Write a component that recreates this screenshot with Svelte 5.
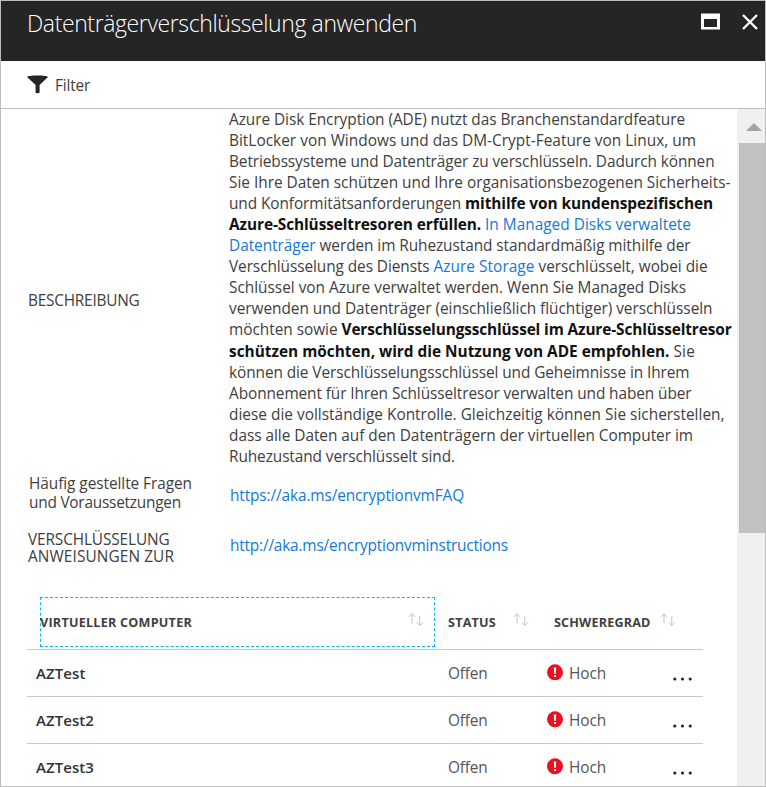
<script>
  // Each segment: text, style, advance width in px (up to the next segment).
  const description = [
    [['Azure Disk Encryption (ADE) nutzt das Branchenstandardfeature', '', 456]],
    [['BitLocker von Windows und das DM-Crypt-Feature von Linux, um', '', 467]],
    [['Betriebssysteme und Datenträger zu verschlüsseln. Dadurch können', '', 485.5]],
    [['Sie Ihre Daten schützen und Ihre organisationsbezogenen Sicherheits-', '', 501.5]],
    [['und Konformitätsanforderungen ', '', 236], ['mithilfe von kundenspezifischen', 'strong', 248]],
    [['Azure-Schlüsseltresoren erfüllen. ', 'strong', 256], ['In Managed Disks verwaltete', 'link', 206]],
    [['Datenträger ', 'link', 90.5], ['werden im Ruhezustand standardmäßig mithilfe der', '', 371]],
    [['Verschlüsselung des Diensts ', '', 204.5], ['Azure Storage ', 'link', 105], ['verschlüsselt, wobei die', '', 169]],
    [['Schlüssel von Azure verwaltet werden. Wenn Sie Managed Disks', '', 457]],
    [['verwenden und Datenträger (einschließlich flüchtiger) verschlüsseln', '', 483.5]],
    [['möchten sowie ', '', 112.5], ['Verschlüsselungsschlüssel im Azure-Schlüsseltresor', 'strong', 390]],
    [['schützen möchten, wird die Nutzung von ADE empfohlen. ', 'strong', 444.5], ['Sie', '', 21.5]],
    [['können die Verschlüsselungsschlüssel und Geheimnisse in Ihrem', '', 460.5]],
    [['Abonnement für Ihren Schlüsseltresor verwalten und haben über', '', 462.5]],
    [['diese die vollständige Kontrolle. Gleichzeitig können Sie sicherstellen,', '', 495.5]],
    [['dass alle Daten auf den Datenträgern der virtuellen Computer im', '', 464]],
    [['Ruhezustand verschlüsselt sind.', '', 226]]
  ];

  const machines = [['AZTest', 49.5], ['AZTest2', 58], ['AZTest3', 58]];

  // Tracks a run of text so that it takes exactly the given width.
  function fit(node, width) {
    const natural = node.getBoundingClientRect().width;
    node.style.letterSpacing = `${(width - natural) / node.textContent.length}px`;
  }
</script>

{#snippet sort()}
  <svg class="sort" width="16" height="14" viewBox="0 0 16 14" fill="none" stroke="#c4c4c4" stroke-width="1">
    <path d="M4 10.5V.8M.8 4 4 .8 7.2 4M11.8 3v9.5M8.6 9.3l3.2 3.2L15 9.3" />
  </svg>
{/snippet}

<div class="blade">
  <header>
    <h1><span use:fit={390}>Datenträgerverschlüsselung anwenden</span></h1>
    <svg class="max" width="19" height="17" viewBox="0 0 19 17"><path fill="#fff" fill-rule="evenodd" d="M0 .5h19v16H0zM3 6v8h13V6z" /></svg>
    <svg class="close" width="16" height="16" viewBox="0 0 16 16"><path d="M1 1l14 14M15 1 1 15" stroke="#fff" stroke-width="2.4" /></svg>
  </header>

  <div class="toolbar">
    <svg width="21" height="19" viewBox="0 0 21 19" fill="#252525"><path d="M0 2C0-.1 21-.1 21 2L12.6 10v7.2c0 1-4 1.5-4 .2V10Z" /></svg>
    <span use:fit={35}>Filter</span>
  </div>

  <div class="body">
    <main>
      <section class="row intro">
        <div class="label"><span use:fit={111.5}>BESCHREIBUNG</span></div>
        <div class="text">
          {#each description as line}
            <div class="line">{#each line as [text, kind, width]}<span class={kind} use:fit={width}>{text}</span>{/each}</div>
          {/each}
        </div>
      </section>
      <section class="row faq">
        <div class="label"><span use:fit={163}>Häufig gestellte Fragen</span><span use:fit={152}>und Voraussetzungen</span></div>
        <div class="url"><span class="link" use:fit={234}>https://aka.ms/encryptionvmFAQ</span></div>
      </section>
      <section class="row howto">
        <div class="label"><span use:fit={141.5}>VERSCHLÜSSELUNG</span><span use:fit={146}>ANWEISUNGEN ZUR</span></div>
        <div class="url"><span class="link" use:fit={278}>http://aka.ms/encryptionvminstructions</span></div>
      </section>

      <div class="table">
        <div class="head">
          <div class="focus"><span use:fit={152}>VIRTUELLER COMPUTER</span>{@render sort()}</div>
          <div class="status"><span use:fit={48}>STATUS</span>{@render sort()}</div>
          <div class="severity"><span use:fit={96.5}>SCHWEREGRAD</span>{@render sort()}</div>
        </div>
        {#each machines as [name, width]}
          <div class="item">
            <div class="name"><span use:fit={width}>{name}</span></div>
            <div class="state"><span use:fit={39.5}>Offen</span></div>
            <svg class="alert" width="16" height="17" viewBox="0 0 16 17"><circle cx="8" cy="8.3" r="8" fill="#e81123" /><path fill="#fff" d="M6.8 3.5h2.4L8.8 9.7H7.2zM7 10.9h2v2H7z" /></svg>
            <div class="level"><span use:fit={37}>Hoch</span></div>
            <svg class="more" width="19" height="4" viewBox="0 0 19 4" fill="#252525"><circle cx="1.8" cy="2" r="1.6" /><circle cx="9.5" cy="2" r="1.6" /><circle cx="17.2" cy="2" r="1.6" /></svg>
          </div>
        {/each}
      </div>
    </main>
    <aside>
      <svg width="16" height="8" viewBox="0 0 16 8"><path d="M8 0l8 8H0z" fill="#a3a3a3" /></svg>
      <div class="thumb"></div>
    </aside>
  </div>
</div>

<style>
  :global(body) { margin: 0; }
  .blade {
    box-sizing: border-box;
    width: 766px;
    height: 787px;
    border: 1px solid #bdbdbd;
    display: flex;
    flex-direction: column;
    overflow: hidden;
    background: #fff;
    color: #404040;
    font: 15.4px/21px "Open Sans", "Noto Sans", sans-serif;
  }
  span { white-space: pre; display: inline-block; }
  header { height: 60px; flex: none; background: #252525; display: flex; align-items: flex-start; }
  h1 { margin: 5px 0 0 26px; width: 674px; font-size: 23px; line-height: 34px; font-weight: 300; color: #fff; }
  .max { margin-top: 12px; }
  .close { margin: 13px 0 0 22px; }
  .toolbar { height: 47px; flex: none; display: flex; border-bottom: 1px solid #bdbdbd; }
  .toolbar svg { margin: 14px 7px 0 26px; }
  .toolbar span { margin-top: 14px; }
  .body { flex: 1; min-height: 0; display: flex; }
  main { width: 736px; overflow: hidden; }
  .row { display: flex; }
  .label { box-sizing: border-box; width: 228px; padding-left: 27px; flex: none; display: flex; flex-direction: column; align-items: flex-start; }
  .intro { height: 358px; }
  .intro .label { padding-top: 181px; }
  .line { height: 21.06px; white-space: pre; display: flex; }
  .strong { font-weight: 700; color: #111; }
  .link { color: #1279d8; }
  .faq { height: 57px; }
  .faq .label { padding: 7px 0 0 28px; line-height: 19px; }
  .url { padding: 18px 0 0 1px; }
  .howto { height: 64px; }
  .howto .label { padding-top: 7px; line-height: 17px; }
  .howto .url { padding-top: 11px; }
  .table { margin-left: 26px; width: 676px; }
  .head { box-sizing: border-box; height: 62px; border-bottom: 1px solid #c8c8c8; padding-top: 9px; display: flex; font-size: 12.6px; font-weight: 700; }
  .focus { box-sizing: border-box; width: 395px; height: 50px; margin-left: 13px; border: 1px dashed #00bcf2; display: flex; justify-content: space-between; padding-right: 10px; }
  .focus span { margin: 14px 0 0 -1px; }
  .focus .sort { margin-top: 15px; }
  .status, .severity { display: flex; }
  .status { width: 106px; margin-left: 13px; }
  .head > div:not(.focus) span { margin-top: 15px; }
  .head > div:not(.focus) .sort { margin: 16px 0 0 17px; }
  .head > .severity:not(.focus) .sort { margin-left: 9px; }
  .item { box-sizing: border-box; height: 47px; border-bottom: 1px solid #c8c8c8; display: flex; }
  .item > div { padding-top: 13px; }
  .name { box-sizing: border-box; width: 421px; padding-left: 9px; font-size: 15px; font-weight: 600; color: #333; }
  .item > .state { width: 99px; font-weight: 400; color: #555; }
  .alert { margin: 14px 6px 0 0; }
  .item > .level { width: 104px; font-weight: 400; color: #555; }
  .more { margin-top: 27px; }
  aside { width: 28px; background: #f0f0f0; display: flex; flex-direction: column; }
  aside svg { margin: 14px 0 12px 9px; flex: none; }
  .thumb { height: 390px; margin-left: 2px; background: #c1c1c1; }
</style>
